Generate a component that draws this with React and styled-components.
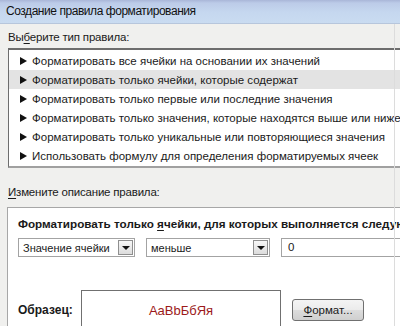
import styled, { createGlobalStyle } from "styled-components";

const GlobalStyle = createGlobalStyle`
  html, body {
    margin: 0;
    padding: 0;
  }
  body {
    font-family: "Liberation Sans", Arial, sans-serif;
    background: #f0f0ee;
  }
`;

const rules = [
  "Форматировать все ячейки на основании их значений",
  "Форматировать только ячейки, которые содержат",
  "Форматировать только первые или последние значения",
  "Форматировать только значения, которые находятся выше или ниже среднего",
  "Форматировать только уникальные или повторяющиеся значения",
  "Использовать формулу для определения форматируемых ячеек",
];

const App = () => {
  return (
    <Dialog>
      <GlobalStyle />
      <TitleBar>Создание правила форматирования</TitleBar>
      <Body>
        <Label>
          Вы<u>б</u>ерите тип правила:
        </Label>
        <ListBox>
          {rules.map((r, i) => (
            <Rule key={r} $selected={i === 1}>
              <Arrow />
              {r}
            </Rule>
          ))}
        </ListBox>
        <Label $gap={17}>
          <u>И</u>змените описание правила:
        </Label>
        <Group>
          <GroupTitle>
            Форматировать только <u>я</u>чейки, для которых выполняется следующее условие:
          </GroupTitle>
          <Conditions>
            <Select $w={117}>
              <span>Значение ячейки</span>
              <DropButton />
            </Select>
            <Select $w={124}>
              <span>меньше</span>
              <DropButton />
            </Select>
            <Input>0</Input>
          </Conditions>
          <SampleRow>
            <SampleLabel>Образец:</SampleLabel>
            <Sample>AaBbБбЯя</Sample>
            <Button>
              <u>Ф</u>ормат...
            </Button>
          </SampleRow>
        </Group>
      </Body>
      <Edge />
    </Dialog>
  );
};

export default App;

const Dialog = styled.div`
  position: relative;
  width: 400px;
  height: 326px;
  overflow: hidden;
  background: #f0f0ee;
  color: #1a1a1a;
  font-size: 11.5px;
`;

const TitleBar = styled.div`
  height: 24px;
  line-height: 23px;
  padding-left: 6px;
  font-size: 12px;
  letter-spacing: -0.45px;
  color: #111;
  background: linear-gradient(#a9b6d8 0px, #bccbe8 3px, #c5d7ef 12px, #cadcf1 24px);
  border-bottom: 1px solid #b7c6dc;
  box-sizing: border-box;
`;

const Edge = styled.div`
  position: absolute;
  top: 24px;
  bottom: 0;
  right: 5px;
  width: 1px;
  background: #dcdcdc;
`;

const Body = styled.div`
  padding-left: 8px;
`;

const Label = styled.div`
  margin-top: ${(p) => p.$gap || 6}px;
  height: 15px;
  line-height: 15px;
  font-size: 11.5px;
  letter-spacing: -0.2px;
  u {
    text-decoration-thickness: 1px;
    text-underline-offset: 2px;
  }
`;

const ListBox = styled.div`
  margin-top: 3px;
  width: 420px;
  background: #fff;
  border-top: 2px solid #6d6d6d;
  border-left: 1px solid #6d6d6d;
  border-bottom: 2px solid #a0a0a0;
  padding: 1px 0;
`;

const Rule = styled.div`
  display: flex;
  align-items: center;
  height: 19px;
  padding-left: 11px;
  white-space: nowrap;
  font-size: 11.5px;
  background: ${(p) => (p.$selected ? "#e3e3e3" : "#fff")};
`;

const Arrow = styled.span`
  flex-shrink: 0;
  width: 0;
  height: 0;
  border-top: 4px solid transparent;
  border-bottom: 4px solid transparent;
  border-left: 7px solid #111;
  margin-right: 5px;
`;

const Group = styled.div`
  margin: 7px 0 0 -1px;
  width: 420px;
  height: 124px;
  background: #fff;
  border: 1px solid #a7a7a7;
  box-sizing: border-box;
  padding: 8px 0 0 10px;
`;

const GroupTitle = styled.div`
  font-weight: bold;
  font-size: 11.7px;
  white-space: nowrap;
  height: 16px;
  line-height: 16px;
  u {
    text-underline-offset: 2px;
  }
`;

const Conditions = styled.div`
  display: flex;
  gap: 11px;
  margin-top: 6px;
`;

const Select = styled.div`
  display: flex;
  align-items: center;
  justify-content: space-between;
  flex-shrink: 0;
  width: ${(p) => p.$w}px;
  height: 19px;
  box-sizing: border-box;
  border: 1px solid #a3a3a3;
  padding: 0 1px 0 4px;
  font-size: 11px;
  white-space: nowrap;
  background: #fff;
`;

const DropButton = styled.span`
  position: relative;
  flex-shrink: 0;
  width: 15px;
  height: 15px;
  box-sizing: border-box;
  border: 1px solid #8f8f8f;
  background: linear-gradient(#f7f7f7, #dcdcdc);
  &::after {
    content: "";
    position: absolute;
    left: 3px;
    top: 5px;
    border-left: 4px solid transparent;
    border-right: 4px solid transparent;
    border-top: 4px solid #111;
  }
`;

const Input = styled.div`
  flex: 1;
  height: 19px;
  box-sizing: border-box;
  border: 1px solid #a3a3a3;
  padding-left: 6px;
  line-height: 17px;
  font-size: 11.5px;
`;

const SampleRow = styled.div`
  display: flex;
  align-items: center;
  margin-top: 33px;
`;

const SampleLabel = styled.div`
  width: 63px;
  font-weight: bold;
  font-size: 12px;
`;

const Sample = styled.div`
  display: flex;
  align-items: center;
  justify-content: center;
  width: 200px;
  height: 40px;
  box-sizing: border-box;
  border: 1px solid #707070;
  color: #9c1a1a;
  font-size: 13px;
`;

const Button = styled.div`
  margin-left: 11px;
  width: 72px;
  height: 22px;
  box-sizing: border-box;
  border: 1px solid #707070;
  border-radius: 3px;
  background: linear-gradient(#f4f4f4 0%, #ebebeb 50%, #dddddd 51%, #cfcfcf 100%);
  font-size: 11.5px;
  line-height: 20px;
  text-align: center;
  u {
    text-underline-offset: 2px;
  }
`;
